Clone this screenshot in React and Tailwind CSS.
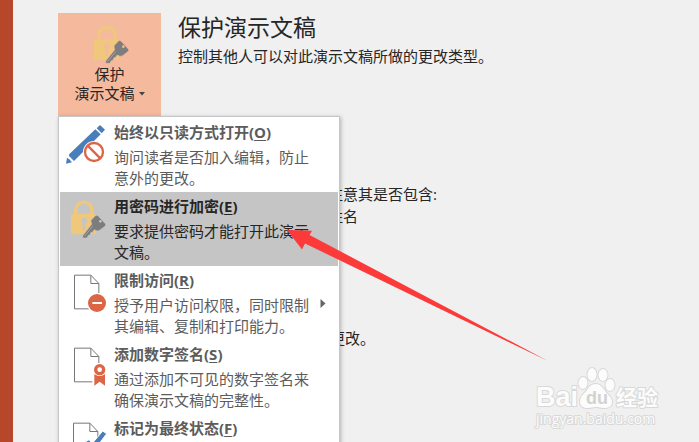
const menuItems = [
  {
    title: "始终以只读方式打开",
    shortcut: "O",
    desc: "询问读者是否加入编辑，防止意外的更改。",
    Icon: ReadOnlyIcon,
  },
  {
    title: "用密码进行加密",
    shortcut: "E",
    desc: "要求提供密码才能打开此演示文稿。",
    Icon: EncryptIcon,
    active: true,
  },
  {
    title: "限制访问",
    shortcut: "R",
    desc: "授予用户访问权限，同时限制其编辑、复制和打印能力。",
    Icon: RestrictIcon,
    submenu: true,
  },
  {
    title: "添加数字签名",
    shortcut: "S",
    desc: "通过添加不可见的数字签名来确保演示文稿的完整性。",
    Icon: SignatureIcon,
  },
  {
    title: "标记为最终状态",
    shortcut: "F",
    Icon: FinalIcon,
  },
];

export default function App() {
  return (
    <div
      lang="zh-CN"
      className="relative flex h-screen w-full overflow-hidden bg-[#f0f0f0] font-['Open_Sans','Noto_Sans_CJK_SC',sans-serif] text-[15px] text-[#262626]"
    >
      <aside className="w-[13px] shrink-0 bg-[#b7472a]" />

      <main className="flex flex-1 items-start gap-[17px] pt-[13px] pl-[45px]">
        {/* Protect button with its open menu */}
        <div className="relative w-[103px] shrink-0">
          <button
            type="button"
            aria-haspopup="menu"
            aria-expanded="true"
            className="flex w-full flex-col items-center bg-[#f5b99d] pt-3 pb-[13px] leading-[19px]"
          >
            <svg width="37" height="40" viewBox="54 44 111 120" className="overflow-visible" aria-hidden="true">
              <LockKey keyhole="#f5b99d" />
            </svg>
            <span>保护</span>
            <span className="flex items-center gap-1">
              演示文稿
              <svg width="6" height="4" viewBox="0 0 6 4" aria-hidden="true">
                <path d="M0 0h6L3 3.4z" fill="#444" />
              </svg>
            </span>
          </button>
          <ProtectMenu />
        </div>

        <div className="min-w-0 flex-1">
          <h1 className="text-[23px] leading-7">保护演示文稿</h1>
          <p className="leading-[30px]">控制其他人可以对此演示文稿所做的更改类型。</p>

          {/* Only the end of each line shows beside the menu */}
          <section className="mt-28 pl-[150px] leading-[22px]">
            <p>注意其是否包含:</p>
            <p>姓名</p>
          </section>

          <section className="mt-[100px] pl-[152px] leading-[22px]">
            <p>更改。</p>
          </section>
        </div>
      </main>

      <Pointer />
      <Watermark />
    </div>
  );
}

function ProtectMenu() {
  return (
    <div
      role="menu"
      className="absolute top-full left-0 z-10 w-[282px] border border-[#c6c6c6] bg-white p-px shadow-[1px_1px_4px_rgba(0,0,0,0.25)]"
    >
      {menuItems.map((item) => (
        <MenuItem key={item.shortcut} {...item} />
      ))}
    </div>
  );
}

function MenuItem({ title, shortcut, desc, Icon, active, submenu }) {
  return (
    <button
      type="button"
      role="menuitem"
      className={`flex w-full items-start text-left ${
        active ? "bg-[#c5c5c5] text-[#262626]" : "bg-white text-[#5c5c5c]"
      }`}
    >
      <span className="w-[54px] shrink-0">
        <Icon />
      </span>
      <span className="w-[200px] pt-0.5 pb-[3px]">
        <span className="block leading-6 font-bold">
          {title}(<u className="underline-offset-2">{shortcut}</u>)
        </span>
        {desc && <span className="mt-[3px] block leading-[21px]">{desc}</span>}
      </span>
      {submenu && (
        <svg className="ml-1.5 self-center" width="6" height="9" viewBox="0 0 6 9" aria-hidden="true">
          <path d="M0.5 0v9L5.5 4.5z" fill="#666" />
        </svg>
      )}
    </button>
  );
}

function LockKey({ keyhole }) {
  return (
    <g>
      <path d="M77 92V75a24 23 0 0 1 49 0v17" fill="none" stroke="#efc87c" strokeWidth="10" />
      <rect x="63" y="87" width="76" height="61" rx="4" fill="#efc87c" />
      <path d="M102 98a9 9 0 0 1 5 17v20h-9v-20a9 9 0 0 1 4-17z" fill={keyhole} />
      <path
        d="M136 92q4-3 8 0l22 24q3 4 0 7l-17 13q-5 3-10 1l-6-3-7 9-3-1-3 8-5 1-4 8H98v-7l27-34-2-8q-1-4 3-7z"
        fill="#7d7d7d"
        stroke={keyhole}
        strokeWidth="2"
      />
      <circle cx="151" cy="109" r="4" fill={keyhole} />
      <path d="M128 124l-25 30" stroke="#b5b5b5" strokeWidth="2" />
    </g>
  );
}

function EncryptIcon() {
  return (
    <svg width="54" height="72" viewBox="30 21 162 216" aria-hidden="true">
      <LockKey keyhole="#c5c5c5" />
    </svg>
  );
}

function ReadOnlyIcon() {
  return (
    <svg width="54" height="72" viewBox="30 24 162 216" aria-hidden="true">
      <path d="M150 45l15 14-10 11-15-15z" fill="#4a7ebb" />
      <path d="M136 58l16 15-80 80-15-15q-1-4 2-7z" fill="#4a7ebb" />
      <path d="M51 143q8 4 15 14l-18 4z" fill="#4a7ebb" />
      <circle cx="132" cy="126" r="33" fill="#fff" />
      <circle cx="132" cy="126" r="27" fill="none" stroke="#dc6546" strokeWidth="7" />
      <path d="M113 107l38 38" stroke="#dc6546" strokeWidth="7" />
    </svg>
  );
}

function Sheet() {
  return (
    <path
      d="M73.500 45.500h49l24 25v76h-73zM122.500 45.500v25h24"
      fill="#fff"
      stroke="#777"
      strokeWidth="3"
    />
  );
}

function RestrictIcon() {
  return (
    <svg width="54" height="72" viewBox="30 18 162 216" aria-hidden="true">
      <Sheet />
      <circle cx="141" cy="129" r="31" fill="#fff" />
      <circle cx="141" cy="129" r="27" fill="#dc6546" />
      <path d="M127 129h29" stroke="#fff" strokeWidth="6" />
    </svg>
  );
}

function SignatureIcon() {
  return (
    <svg width="54" height="72" viewBox="30 21 162 216" aria-hidden="true">
      <Sheet />
      <path d="M127 90h40v75h-40z" fill="#fff" />
      <path d="M133 124h32v34l-16-12-16 12z" fill="#dc6546" />
      <circle cx="149" cy="110" r="19" fill="#fff" />
      <circle cx="149" cy="110" r="12" fill="none" stroke="#dc6546" strokeWidth="10" />
    </svg>
  );
}

function FinalIcon() {
  return (
    <svg width="54" height="72" viewBox="33 18 162 216" aria-hidden="true">
      <Sheet />
      <path d="M107 103l13-8 10 11 31-37 12 8-43 57z" fill="#4a7ebb" stroke="#fff" strokeWidth="3" />
    </svg>
  );
}

/* Red arrow pointing at the encrypt entry */
function Pointer() {
  return (
    <svg
      className="pointer-events-none absolute top-[230px] left-[287px] z-20"
      width="262"
      height="132"
      viewBox="0 0 262 132"
      aria-hidden="true"
    >
      <path d="M0 0l25 0.700-2.500 4.300L261 131 18 13.500 15 19.500z" fill="#fd3a3a" />
    </svg>
  );
}

function Watermark() {
  return (
    <svg
      className="pointer-events-none absolute right-9 bottom-2.5"
      width="130"
      height="66"
      viewBox="0 0 130 66"
      role="img"
      aria-label="Baidu 经验"
      fill="#fcfcfc"
      stroke="#d8d8d8"
      strokeWidth="2"
      strokeLinejoin="round"
      paintOrder="stroke"
    >
      <text x="3" y="40" fontSize="27" fontWeight="700" fontFamily="Liberation Sans, sans-serif">Bai</text>
      <ellipse cx="50" cy="17" rx="4.500" ry="6" />
      <ellipse cx="59" cy="8.500" rx="4.500" ry="6.500" />
      <ellipse cx="70" cy="9" rx="4.500" ry="6" />
      <ellipse cx="77" cy="19" rx="4.500" ry="6" />
      <path d="M63 18c5 0 7 4 9 7s7 6 7 11-4 6-8 6-5-1-8-1-5 1-9 1-7-2-7-7 5-8 7-11 4-6 9-6z" />
      <text x="53" y="38" fontSize="18" fontWeight="700" fontFamily="Liberation Sans, sans-serif" fill="#d2d2d2" stroke="none">du</text>
      <text x="83" y="39" fontSize="21" fontWeight="700" fontFamily="Noto Sans CJK SC, sans-serif">经验</text>
      <text x="3" y="58" fontSize="14" fontFamily="Open Sans, sans-serif" strokeWidth="2">jingyan.baidu.com</text>
    </svg>
  );
}
